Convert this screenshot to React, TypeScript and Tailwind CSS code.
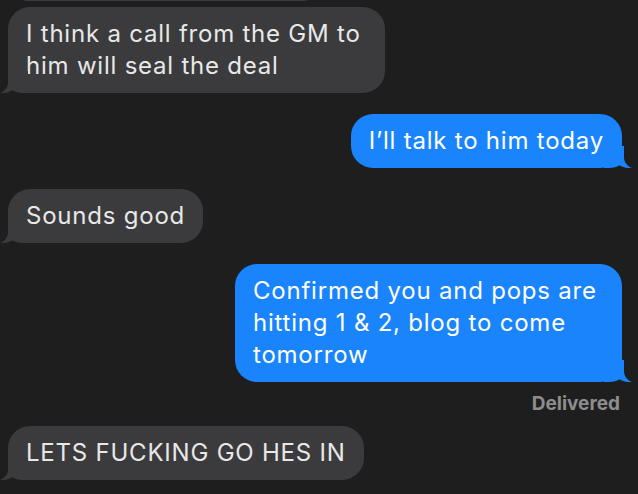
import type { ReactNode } from "react";

type Side = "in" | "out";

function Tail({ side }: { side: Side }) {
  const fill = side === "in" ? "#3b3b3d" : "#1a84fd";
  return (
    <svg
      width="28"
      height="22"
      viewBox="0 0 28 22"
      className={
        side === "in"
          ? "absolute bottom-0 left-[-8px]"
          : "absolute bottom-0 right-[-10px] -scale-x-100"
      }
    >
      <path
        d="M8 0 L8 11 C8 16.5 5 20 0 22 C5 22.4 9.5 21.2 12.5 19.2 C15.5 21.2 19 22 28 22 L28 0 Z"
        fill={fill}
      />
    </svg>
  );
}

function Bubble({
  side,
  tail = true,
  className = "",
  children,
}: {
  side: Side;
  tail?: boolean;
  className?: string;
  children: ReactNode;
}) {
  const color =
    side === "in" ? "bg-[#3b3b3d] text-[#e8e8e8]" : "bg-[#1a84fd] text-white";
  return (
    <div className={`flex ${side === "in" ? "justify-start" : "justify-end"}`}>
      <div
        className={`relative rounded-[22px] px-[18px] py-[11px] text-[24px] leading-[32px] tracking-[0.78px] whitespace-nowrap ${color} ${className}`}
      >
        {children}
        {tail && <Tail side={side} />}
      </div>
    </div>
  );
}

export default function App() {
  return (
    <main
      className="h-[494px] w-[638px] overflow-hidden bg-[#1e1e1e] pl-[8px] pr-[16px]"
      style={{ fontFamily: "Inter, 'Noto Sans', sans-serif" }}
    >
      <div className="flex flex-col">
        {/* previous message, scrolled off the top */}
        <div className="mt-[-40px] h-[41px] w-[315px] rounded-[22px] bg-[#3b3b3d]" />

        <div className="mt-[6px]">
          <Bubble side="in" className="w-[377px]">
            I think a call from the GM to
            <br />
            him will seal the deal
          </Bubble>
        </div>

        <div className="mt-[21px]">
          <Bubble side="out">I’ll talk to him today</Bubble>
        </div>

        <div className="mt-[21px]">
          <Bubble side="in">Sounds good</Bubble>
        </div>

        <div className="mt-[21px]">
          <Bubble side="out" className="w-[387px]">
            Confirmed you and pops are
            <br />
            hitting 1 &amp; 2, blog to come
            <br />
            tomorrow
          </Bubble>
        </div>

        <div className="mt-[10px] pr-[2px] text-right text-[19px] font-bold leading-[24px] text-[#8d8d8d]">
          Delivered
        </div>

        <div className="mt-[10px]">
          <Bubble side="in">LETS FUCKING GO HES IN</Bubble>
        </div>
      </div>
    </main>
  );
}
